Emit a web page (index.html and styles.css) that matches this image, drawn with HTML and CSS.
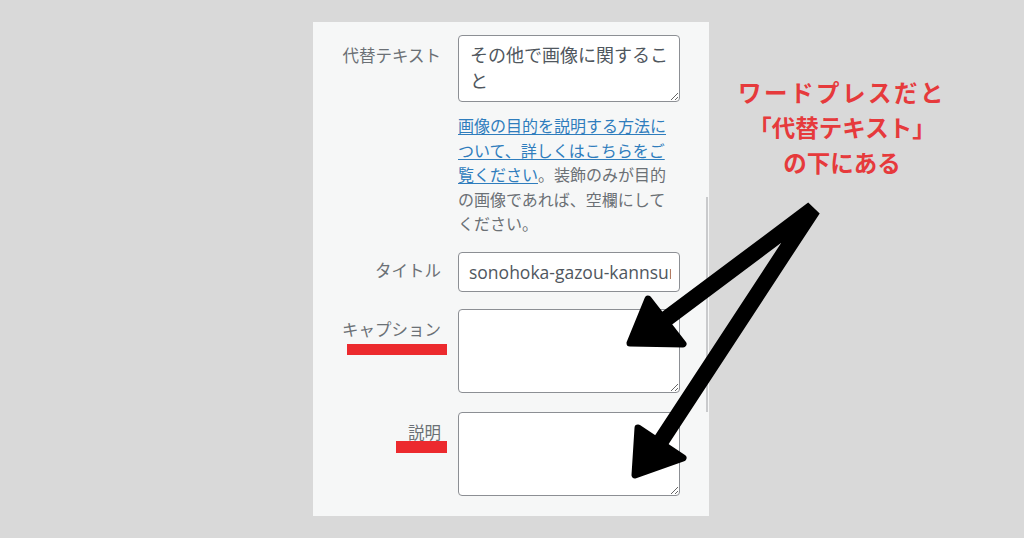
FILE: index.html
```html
<!DOCTYPE html>
<html lang="ja">
<head>
<meta charset="utf-8">
<title>添付ファイルの詳細</title>
<link rel="stylesheet" href="styles.css">
</head>
<body>
<div class="page">
  <section class="panel">
    <div class="scrollbar"></div>

    <div class="row row-alt">
      <label class="lbl" for="alt">代替テキスト</label>
      <textarea id="alt" class="field ta ta-alt">その他で画像に関すること</textarea>
    </div>

    <div class="row row-help">
      <span></span>
      <p class="help"><a href="#">画像の目的を説明する方法について、詳しくはこちらをご覧ください</a>。装飾のみが目的の画像であれば、空欄にしてください。</p>
    </div>

    <div class="row row-title">
      <label class="lbl lbl-title" for="ttl">タイトル</label>
      <input id="ttl" class="field inp" type="text" value="sonohoka-gazou-kannsuru-koto">
    </div>

    <div class="row row-cap">
      <label class="lbl" for="cap">キャプション</label>
      <textarea id="cap" class="field ta ta-big"></textarea>
      <span class="mark mark-cap"></span>
    </div>

    <div class="row row-desc">
      <label class="lbl" for="desc">説明</label>
      <textarea id="desc" class="field ta ta-big"></textarea>
      <span class="mark mark-desc"></span>
    </div>
  </section>

  <div class="note">
    <p class="note-text"><span class="note-l1">ワードプレスだと</span><br>「代替テキスト」<br>の下にある</p>
  </div>

  <svg class="arrows" viewBox="0 0 1024 538" width="1024" height="538" aria-hidden="true">
    <polyline points="666,319 813,209 661,441" fill="none" stroke="#000" stroke-width="16" stroke-linejoin="bevel" stroke-linecap="butt"/>
    <polygon points="648,299 683,344 630,343" fill="#000" stroke="#000" stroke-width="7" stroke-linejoin="round"/>
    <polygon points="638,428 683,458 635,475" fill="#000" stroke="#000" stroke-width="7" stroke-linejoin="round"/>
  </svg>
</div>
</body>
</html>
```

FILE: styles.css
```css
html, body {
  margin: 0;
  padding: 0;
}

body {
  background: #d9d9d9;
  font-family: "Noto Sans CJK JP", "Noto Sans", sans-serif;
}

.page {
  position: relative;
  width: 1024px;
  height: 538px;
  box-sizing: border-box;
  padding: 22px 0 0 313px;
  display: flex;
  align-items: flex-start;
  overflow: hidden;
}

.panel {
  position: relative;
  width: 396px;
  height: 494px;
  box-sizing: border-box;
  background: #f6f7f7;
  padding-top: 13px;
  display: flex;
  flex-direction: column;
}

.scrollbar {
  position: absolute;
  right: 1px;
  top: 175px;
  width: 2px;
  height: 215px;
  background: #c9cacc;
}

.row {
  position: relative;
  display: grid;
  grid-template-columns: 128px 222px;
  column-gap: 17px;
  align-items: start;
}

.lbl {
  text-align: right;
  font-size: 16.5px;
  line-height: 24px;
  color: #6b7075;
  padding-top: 8px;
  white-space: nowrap;
}

.lbl-title {
  padding-top: 6px;
}

.field {
  box-sizing: border-box;
  width: 222px;
  margin: 0;
  border: 1px solid #8c8f94;
  border-radius: 4px;
  background: #fff;
  color: #50575e;
  outline: none;
}

.ta {
  display: block;
  font-family: "Noto Sans CJK JP", "Noto Sans", sans-serif;
  font-size: 18px;
  line-height: 26px;
  padding: 5px 8px 0 11px;
}

.ta-alt {
  height: 67px;
}

.ta-big {
  height: 84px;
}

.inp {
  height: 40px;
  font-family: "Open Sans", "Noto Sans", sans-serif;
  font-size: 17.5px;
  padding: 0 8px 0 10px;
}

.row-help {
  margin-top: 11px;
}

.help {
  margin: 0;
  font-size: 16px;
  line-height: 24.5px;
  color: #6b7075;
}

.help a {
  color: #2f7dbd;
  text-decoration: underline;
  text-underline-offset: 2px;
}

.row-title {
  margin-top: 16.5px;
}

.row-cap {
  margin-top: 17px;
}

.row-desc {
  margin-top: 19px;
}

.mark {
  position: absolute;
  background: #ec2a2e;
}

.mark-cap {
  left: 34px;
  top: 35px;
  width: 100px;
  height: 11px;
}

.mark-desc {
  left: 83px;
  top: 29px;
  width: 51px;
  height: 12px;
}

.note {
  width: 266px;
  margin-top: 53px;
}

.note-text {
  margin: 0;
  text-align: center;
  font-family: "Noto Sans CJK JP", sans-serif;
  font-weight: 700;
  font-size: 23.5px;
  line-height: 35px;
  color: #e63a3c;
}

.note-l1 {
  letter-spacing: 2.5px;
}

.arrows {
  position: absolute;
  left: 0;
  top: 0;
  pointer-events: none;
}
```
